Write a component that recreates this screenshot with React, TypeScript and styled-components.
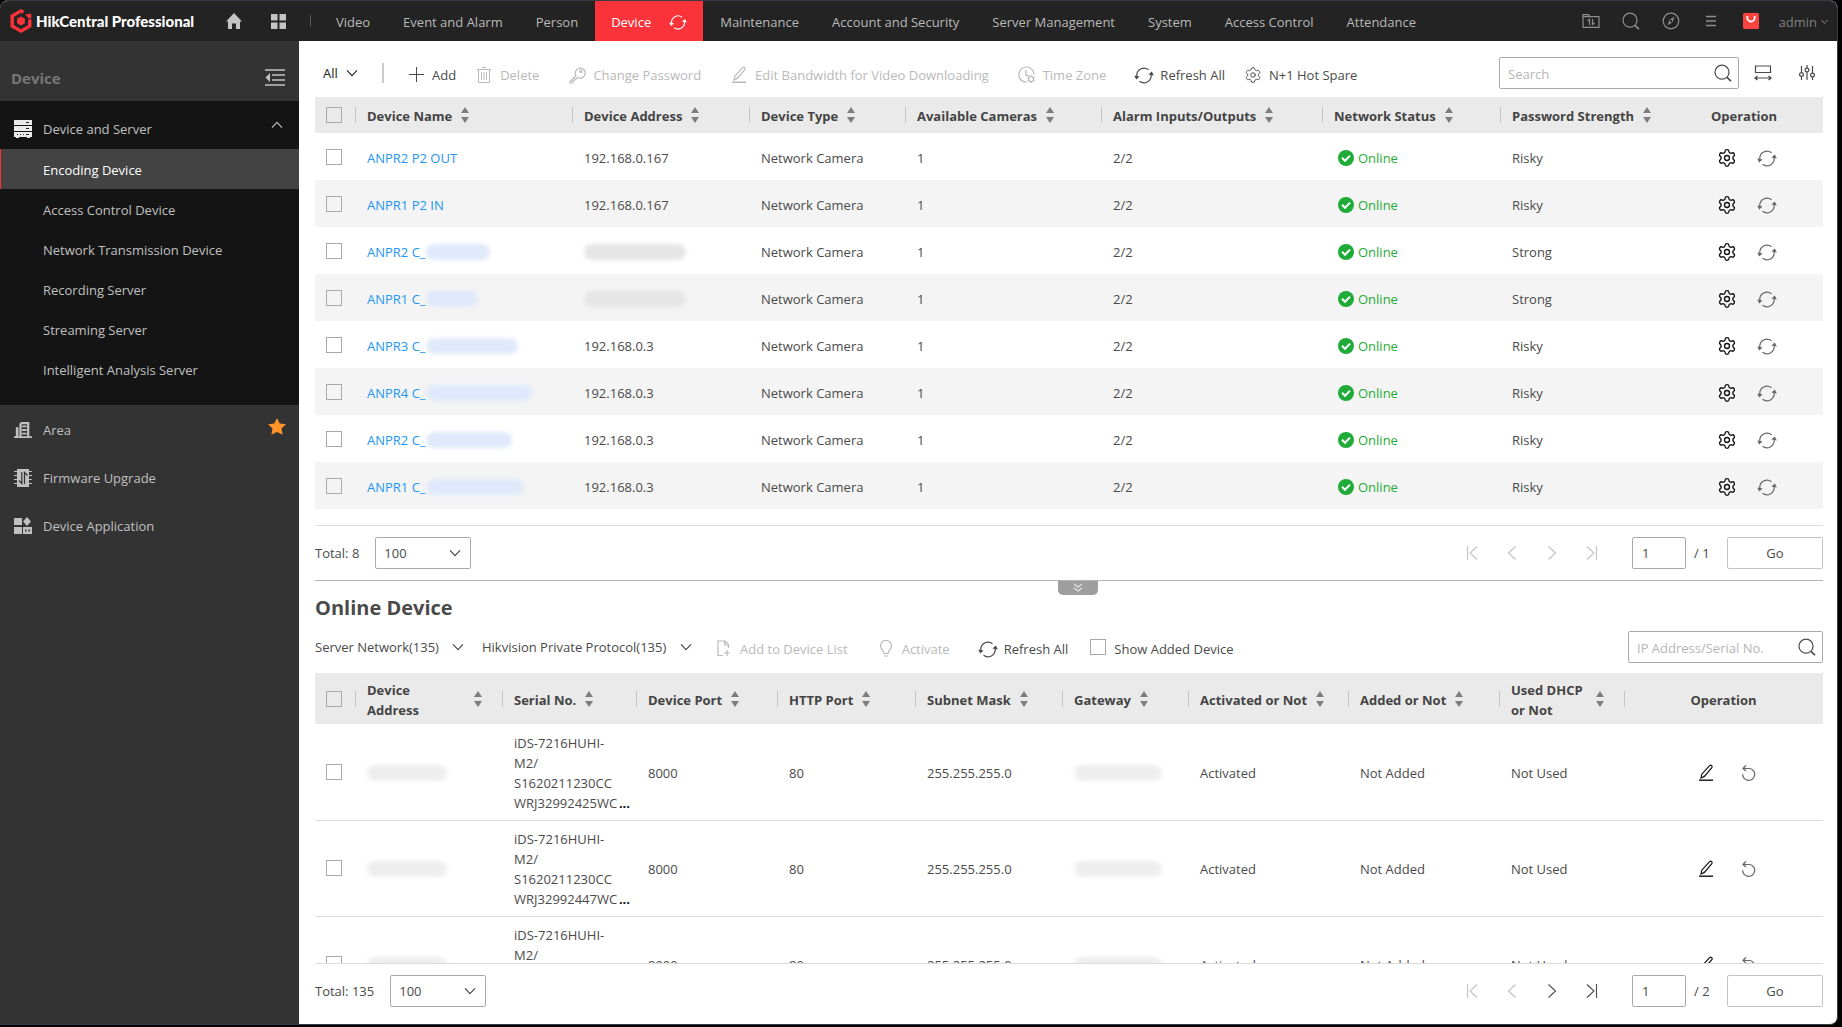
import React from 'react';
import styled, { createGlobalStyle } from 'styled-components';
import { Settings } from 'lucide-react';

interface Device {
    name: string;
    hidden?: number;
    address?: string;
    strength: string;
}

interface Column {
    label: string;
    width: number;
    sortable?: boolean;
}

const navBefore = ['Video', 'Event and Alarm', 'Person'];
const navAfter = ['Maintenance', 'Account and Security', 'Server Management', 'System', 'Access Control', 'Attendance'];

const serverMenu = [
    'Encoding Device',
    'Access Control Device',
    'Network Transmission Device',
    'Recording Server',
    'Streaming Server',
    'Intelligent Analysis Server',
];

const deviceColumns: Column[] = [
    { label: 'Device Name', width: 217, sortable: true },
    { label: 'Device Address', width: 177, sortable: true },
    { label: 'Device Type', width: 156, sortable: true },
    { label: 'Available Cameras', width: 196, sortable: true },
    { label: 'Alarm Inputs/Outputs', width: 221, sortable: true },
    { label: 'Network Status', width: 178, sortable: true },
    { label: 'Password Strength', width: 165, sortable: true },
    { label: 'Operation', width: 158 },
];

const devices: Device[] = [
    { name: 'ANPR2 P2 OUT', address: '192.168.0.167', strength: 'Risky' },
    { name: 'ANPR1 P2 IN', address: '192.168.0.167', strength: 'Risky' },
    { name: 'ANPR2 C_', hidden: 64, strength: 'Strong' },
    { name: 'ANPR1 C_', hidden: 52, strength: 'Strong' },
    { name: 'ANPR3 C_', hidden: 92, address: '192.168.0.3', strength: 'Risky' },
    { name: 'ANPR4 C_', hidden: 106, address: '192.168.0.3', strength: 'Risky' },
    { name: 'ANPR2 C_', hidden: 86, address: '192.168.0.3', strength: 'Risky' },
    { name: 'ANPR1 C_', hidden: 98, address: '192.168.0.3', strength: 'Risky' },
];

const onlineColumns: Column[] = [
    { label: 'Device Address', width: 147, sortable: true },
    { label: 'Serial No.', width: 134, sortable: true },
    { label: 'Device Port', width: 141, sortable: true },
    { label: 'HTTP Port', width: 138, sortable: true },
    { label: 'Subnet Mask', width: 147, sortable: true },
    { label: 'Gateway', width: 126, sortable: true },
    { label: 'Activated or Not', width: 160, sortable: true },
    { label: 'Added or Not', width: 151, sortable: true },
    { label: 'Used DHCP or Not', width: 125, sortable: true },
    { label: 'Operation', width: 199 },
];

const serials = ['WRJ32992425WC', 'WRJ32992447WC', 'WRJ32992451WC'];

const RefreshIcon = ({ size = 20 }: { size?: number }) => (
    <svg width={size} height={size} viewBox="0 0 20 20" fill="none" stroke="currentColor" strokeWidth="1.2">
        <path d="M14.5 4.7A7.3 7.3 0 0 0 2.8 11M5.5 16.300A7.3 7.3 0 0 0 17.2 10" />
        <path d="M0.2 10.400l5.400 1-3.400 3zM19.800 10.600l-5.400-1 3.400-3z" fill="currentColor" stroke="none" />
    </svg>
);

const SearchIcon = ({ size = 18 }: { size?: number }) => (
    <svg width={size} height={size} viewBox="0 0 18 18" fill="none" stroke="currentColor" strokeWidth="1.2">
        <circle cx="8" cy="8.2" r="7" />
        <path d="M13 13.4l4 3.8" strokeWidth="1.6" />
    </svg>
);

const PencilIcon = () => (
    <svg width="20" height="20" viewBox="0 0 20 20" fill="none" stroke="currentColor" strokeWidth="1.2">
        <path d="M5 15l.8-3.8L13.6 2.6q1-.9 2 0t.2 2L8.4 13.4z" />
        <path d="M3 17.2h14" strokeWidth="1.4" />
    </svg>
);

const Chevron = ({ up = false }: { up?: boolean }) => (
    <svg width="12" height="8" viewBox="0 0 12 8" fill="none" stroke="currentColor" strokeWidth="1.2">
        <path d={up ? 'M1 6.6L6 1.4l5 5.2' : 'M1 1.4l5 5.2 5-5.2'} />
    </svg>
);

const SortIcon = () => (
    <svg width="8" height="16" viewBox="0 0 8 16" fill="#7d7d7d">
        <path d="M4 0l4 6H0zM4 16l4-6H0z" />
    </svg>
);

const CheckBadge = () => (
    <svg width="16" height="16" viewBox="0 0 16 16">
        <circle cx="8" cy="8" r="8" fill="#1fab38" />
        <path d="M4 7.8l3 3 5-5.2" fill="none" stroke="#fff" strokeWidth="2" />
    </svg>
);

const PageIcon = ({ kind }: { kind: string }) => {
    const paths: Record<string, string> = {
        first: 'M1.500 0v14M11 .5L4 7l7 6.500',
        prev: 'M9.500 .5L2.500 7l7 6.500',
        next: 'M2.500 .5l7 6.500-7 6.500',
        last: 'M10.500 0v14M1 .5l7 6.500-7 6.500',
    };
    return (
        <svg width="12" height="14" viewBox="0 0 12 14" fill="none" stroke="currentColor" strokeWidth="1.1">
            <path d={paths[kind]} />
        </svg>
    );
};

const TableHead = ({ columns, id }: { columns: Column[]; id: string }) => (
    <>
        <colgroup>
            <Col $width={40} />
            {columns.map((c) => <Col key={c.label} $width={c.width} />)}
        </colgroup>
        <thead>
            <tr>
                <HeadCell>
                    <Checkbox id={id} aria-label="Select all" />
                </HeadCell>
                {columns.map((c) => (
                    <HeadCell key={c.label} $center={!c.sortable} $divider={id === 'online' || !!c.sortable}>
                        <HeadLabel $center={!c.sortable}>
                            <span>{c.label}</span>
                            {c.sortable && <SortIcon />}
                        </HeadLabel>
                    </HeadCell>
                ))}
            </tr>
        </thead>
    </>
);

const Pager = ({ total, pages, name }: { total: number; pages: number; name: string }) => (
    <PagerBar>
        <label htmlFor={`${name}-size`}>Total: {total}</label>
        <PageSize>
            <select id={`${name}-size`} defaultValue="100">
                <option>100</option>
            </select>
            <Chevron />
        </PageSize>
        <PageButtons>
            <PageButton disabled aria-label="First page"><PageIcon kind="first" /></PageButton>
            <PageButton disabled aria-label="Previous page"><PageIcon kind="prev" /></PageButton>
            <PageButton disabled={pages < 2} aria-label="Next page"><PageIcon kind="next" /></PageButton>
            <PageButton disabled={pages < 2} aria-label="Last page"><PageIcon kind="last" /></PageButton>
        </PageButtons>
        <PageInput defaultValue="1" aria-label="Page" />
        <PageCount>/ {pages}</PageCount>
        <GoButton>Go</GoButton>
    </PagerBar>
);

const TopBar = () => (
    <Header>
        <Brand>
            <svg width="22" height="24" viewBox="0 0 22 24" fill="none">
                <path d="M13.500 3.300L11 1.900 2.200 7v10L11 22.100 19.800 17v-6.500" stroke="#fa3239" strokeWidth="3.400" />
                <path d="M11 7.600l3.900 2.200v4.500L11 16.500l-3.900-2.200V9.800z" fill="#fa3239" />
                <path d="M15.300 5.200l5.900-.4v4.700l-2.900-.2z" fill="#fa3239" />
            </svg>
            <BrandName>HikCentral Professional</BrandName>
        </Brand>
        <HomeLink href="#home" aria-label="Home">
            <svg width="16" height="16" viewBox="0 0 16 16" fill="currentColor">
                <path d="M8 0l8 8.500h-2V16h-4v-5.500H6V16H2V8.500H0z" />
            </svg>
        </HomeLink>
        <HomeLink href="#apps" aria-label="Applications">
            <svg width="15" height="15" viewBox="0 0 15 15" fill="currentColor">
                <path d="M0 0h6.500v6.500H0zM8.500 0H15v6.500H8.500zM0 8.500h6.500V15H0zM8.500 8.500H15V15H8.500z" />
            </svg>
        </HomeLink>
        <BarDivider />
        <Nav>
            {navBefore.map((n) => <NavLink key={n} href="#">{n}</NavLink>)}
            <NavLink href="#" $active>
                Device
                <RefreshIcon size={18} />
            </NavLink>
            {navAfter.map((n) => <NavLink key={n} href="#">{n}</NavLink>)}
        </Nav>
        <HeaderTools>
            <ToolButton aria-label="Tasks">
                <svg width="18" height="16" viewBox="0 0 18 16" fill="none" stroke="currentColor" strokeWidth="1.2">
                    <path d="M1 14.400V1.600h5.500l1.500 2h9v10.800zM1 3.600h7" />
                    <path d="M7.500 12V6.500L5.500 8M10.500 6v5.500l2-1.800" />
                </svg>
            </ToolButton>
            <ToolButton aria-label="Search"><SearchIcon /></ToolButton>
            <ToolButton aria-label="Wizard">
                <svg width="18" height="18" viewBox="0 0 18 18" fill="none" stroke="currentColor" strokeWidth="1.200">
                    <circle cx="9" cy="9" r="7.800" />
                    <path d="M12.500 4.500L7.600 7.700 5.500 13.500l4.900-3.200z" fill="currentColor" stroke="none" />
                    <circle cx="9" cy="9" r="1.200" fill="#232323" stroke="none" />
                </svg>
            </ToolButton>
            <ToolButton aria-label="Menu">
                <svg width="12" height="12" viewBox="0 0 12 12" stroke="currentColor" strokeWidth="1.600">
                    <path d="M1 1.500h10M1 6h10M1 10.500h10" />
                </svg>
            </ToolButton>
            <ToolButton aria-label="Store">
                <svg width="16" height="16" viewBox="0 0 16 16">
                    <rect width="16" height="16" rx="1.500" fill="#fb4440" />
                    <path d="M4.300 3v1.800a3.700 3.700 0 0 0 7.400 0V3" fill="none" stroke="#fff" strokeWidth="1.800" />
                </svg>
            </ToolButton>
            <UserButton>
                admin
                <svg width="7" height="6" viewBox="0 0 7 6" fill="none" stroke="currentColor">
                    <path d="M.5 1l3 3.500 3-3.500" />
                </svg>
            </UserButton>
        </HeaderTools>
    </Header>
);

const SideBar = () => (
    <Side>
        <SideTitle>
            <span>Device</span>
            <CollapseButton aria-label="Collapse menu">
                <svg width="20" height="17" viewBox="0 0 20 17" stroke="currentColor" strokeWidth="1.500">
                    <path d="M0 1h20M7 6h13M7 11h13M0 16h20" />
                    <path d="M5 4v9L.5 8.500z" fill="currentColor" stroke="none" />
                </svg>
            </CollapseButton>
        </SideTitle>
        <SideGroup>
            <SideItem href="#" $top>
                <svg width="18" height="18" viewBox="0 0 18 18" fill="#eaeaea">
                    <path d="M0 0h18v5H0zM0 6h18v5H0zM0 12h18v5H0zM2 17h3v1H2zM13 17h3v1h-3z" />
                    <path d="M12 2h3v1h-3zM12 8h3v1h-3zM12 14h3v1h-3zM3 14h1v1H3zM6 14h1v1H6zM9 14h1v1H9z" fill="#222" />
                </svg>
                <span>Device and Server</span>
                <Chevron up />
            </SideItem>
            {serverMenu.map((m, i) => <SubItem key={m} href="#" $active={i === 0}>{m}</SubItem>)}
        </SideGroup>
        <SideItem href="#">
            <svg width="20" height="18" viewBox="0 0 20 18" fill="currentColor">
                <path d="M0 16h20v2H0zM2 6h3v10H2zM6 16V2l2-2h9v16h-2.500V2.500h-6V16z" />
                <path d="M9 4h5v2H9zM9 8h5v2H9zM9 12h5v2H9z" />
            </svg>
            <span>Area</span>
            <svg width="18" height="17" viewBox="0 0 18 17" fill="#ff9429">
                <path d="M9 0l2.700 5.500 6.300.8-4.500 4.200 1.100 6.300L9 13.900l-5.600 2.900 1.100-6.300L0 6.300l6.300-.8z" />
            </svg>
        </SideItem>
        <SideItem href="#">
            <svg width="18" height="18" viewBox="0 0 18 18" fill="currentColor">
                <path d="M3 0h12v18H3zM0 2h3v1H0zM0 6h3v1H0zM0 10h3v1H0zM0 14h3v1H0zM15 2h3v1h-3zM15 6h3v1h-3zM15 10h3v1h-3zM15 14h3v1h-3z" />
                <path d="M7.800 3v11.500L5 11.500M10.500 15V3.500l3 3" fill="none" stroke="#333" strokeWidth="1.200" />
            </svg>
            <span>Firmware Upgrade</span>
        </SideItem>
        <SideItem href="#">
            <svg width="18" height="18" viewBox="0 0 18 18" fill="currentColor">
                <path d="M0 1h8v7H0zM0 10h8v7H0zM13 0l4 4.500L13 9 9 4.500zM9 10h9v7H9z" />
                <path d="M11 12.500h1.500v2H11zM14.500 12.500H16v2h-1.500z" fill="#333" />
            </svg>
            <span>Device Application</span>
        </SideItem>
    </Side>
);

const DeviceList = () => (
    <section>
        <Toolbar>
            <Dropdown $dark>
                <select aria-label="Device filter"><option>All</option></select>
                <Chevron />
            </Dropdown>
            <ToolDivider />
            <Action>
                <IconSlot>
                    <svg width="15" height="15" viewBox="0 0 15 15" stroke="currentColor"><path d="M7.500 0v15M0 7.500h15" /></svg>
                </IconSlot>
                Add
            </Action>
            <Action disabled>
                <IconSlot>
                    <svg width="14" height="16" viewBox="0 0 14 16" fill="none" stroke="currentColor">
                        <path d="M0 2.500h14M5 .5h4M1.500 2.500v13h11v-13M4.500 5v8M7 5v8M9.500 5v8" />
                    </svg>
                </IconSlot>
                Delete
            </Action>
            <Action disabled>
                <IconSlot>
                    <svg width="18" height="18" viewBox="0 0 18 18" fill="none" stroke="currentColor" strokeWidth="1.200">
                        <path d="M8 9.800L2 15.500v1.500h2.500v-2h2v-2H8.500l1.300-1.500A5 5 0 1 0 8 9.800z" />
                        <circle cx="12.800" cy="5.200" r="1.200" />
                    </svg>
                </IconSlot>
                Change Password
            </Action>
            <Action disabled>
                <IconSlot><PencilIcon /></IconSlot>
                Edit Bandwidth for Video Downloading
            </Action>
            <Action disabled>
                <IconSlot>
                    <svg width="18" height="18" viewBox="0 0 18 18" fill="none" stroke="currentColor" strokeWidth="1.200">
                        <path d="M8.500 16.200A7.600 7.600 0 1 1 16 8.500M8 4v5.500h3" />
                        <circle cx="13" cy="13" r="2.500" />
                        <path d="M13 9v1.500M13 15.500V17M9.500 11l1.300.8M15.200 14.200l1.300.8M9.500 15l1.300-.8M15.200 11.800l1.300-.8" />
                    </svg>
                </IconSlot>
                Time Zone
            </Action>
            <Action>
                <IconSlot><RefreshIcon /></IconSlot>
                Refresh All
            </Action>
            <Action>
                <IconSlot><Settings size={18} strokeWidth={1.3} /></IconSlot>
                N+1 Hot Spare
            </Action>
            <SearchBox $width={240}>
                <input aria-label="Search" placeholder="Search" />
                <SearchIcon />
            </SearchBox>
            <ViewButton aria-label="Column width">
                <svg width="18" height="16" viewBox="0 0 18 16" fill="none" stroke="currentColor" strokeWidth="1.200">
                    <path d="M1.500 1h15v6.500h-15zM1 13h16M3.500 11L1 13l2.500 2M14.500 11l2.500 2-2.500 2" />
                </svg>
            </ViewButton>
            <ViewButton aria-label="Custom columns">
                <svg width="16" height="16" viewBox="0 0 16 16" fill="none" stroke="currentColor" strokeWidth="1.200">
                    <path d="M2.500 1v6.500M2.500 11.500V15M8 0v3M8 7v8M13.500 1v7M13.500 12v3" />
                    <circle cx="2.500" cy="9.500" r="1.900" />
                    <circle cx="8" cy="5" r="1.900" />
                    <circle cx="13.500" cy="10" r="1.900" />
                </svg>
            </ViewButton>
        </Toolbar>
        <DeviceTable>
            <TableHead columns={deviceColumns} id="devices" />
            <tbody>
                {devices.map((d, i) => (
                    <tr key={i}>
                        <td><Checkbox aria-label={`Select ${d.name}`} /></td>
                        <td>
                            <DeviceLink href="#">
                                {d.name}
                                {d.hidden && <Redacted $width={d.hidden} $tint="#dfe9fb" />}
                            </DeviceLink>
                        </td>
                        <td>{d.address || <Redacted $width={102} $tint="#e5e5e5" />}</td>
                        <td>Network Camera</td>
                        <td>1</td>
                        <td>2/2</td>
                        <td><Status><CheckBadge />Online</Status></td>
                        <td>{d.strength}</td>
                        <td>
                            <Operations>
                                <RowButton $dark aria-label="Configure"><Settings size={20} strokeWidth={1.6} /></RowButton>
                                <RowButton aria-label="Refresh"><RefreshIcon /></RowButton>
                            </Operations>
                        </td>
                    </tr>
                ))}
            </tbody>
        </DeviceTable>
        <Pager total={8} pages={1} name="devices" />
    </section>
);

const OnlineDevices = () => (
    <OnlineSection>
        <Handle aria-label="Collapse online devices">
            <svg width="10" height="10" viewBox="0 0 10 10" fill="none" stroke="#e4e4e4" strokeWidth="1.200">
                <path d="M1 1l4 3 4-3M1 5l4 3 4-3" />
            </svg>
        </Handle>
        <OnlineTitle>Online Device</OnlineTitle>
        <OnlineToolbar>
            <Dropdown>
                <select aria-label="Network"><option>Server Network(135)</option></select>
                <Chevron />
            </Dropdown>
            <Dropdown>
                <select aria-label="Protocol"><option>Hikvision Private Protocol(135)</option></select>
                <Chevron />
            </Dropdown>
            <Action disabled>
                <IconSlot>
                    <svg width="14" height="17" viewBox="0 0 14 17" fill="none" stroke="currentColor" strokeWidth="1.200">
                        <path d="M6 15.500H1V1h7l3.500 3.500V8M7.500 1v4h4M10 10v6M7 13h6" />
                    </svg>
                </IconSlot>
                Add to Device List
            </Action>
            <Action disabled>
                <IconSlot>
                    <svg width="14" height="18" viewBox="0 0 14 18" fill="none" stroke="currentColor" strokeWidth="1.200">
                        <path d="M5 13.500C5 11 1.500 9.500 1.500 6a5.500 5.500 0 0 1 11 0c0 3.500-3.500 5-3.500 7.500zM5 16h4" />
                    </svg>
                </IconSlot>
                Activate
            </Action>
            <Action>
                <IconSlot><RefreshIcon /></IconSlot>
                Refresh All
            </Action>
            <ShowAdded>
                <Checkbox />
                <span>Show Added Device</span>
            </ShowAdded>
            <SearchBox $width={195}>
                <input aria-label="IP Address/Serial No." placeholder="IP Address/Serial No." />
                <SearchIcon />
            </SearchBox>
        </OnlineToolbar>
        <TableClip>
            <OnlineTable>
                <TableHead columns={onlineColumns} id="online" />
                <tbody>
                    {serials.map((s) => (
                        <tr key={s}>
                            <td><Checkbox aria-label={`Select ${s}`} /></td>
                            <td><Redacted $width={80} $tint="#eee" /></td>
                            <td>
                                <Serial>
                                    iDS-7216HUHI-<br />M2/<br />S1620211230CC<br />{s}
                                    <b>...</b>
                                </Serial>
                            </td>
                            <td>8000</td>
                            <td>80</td>
                            <td>255.255.255.0</td>
                            <td><Redacted $width={88} $tint="#eee" /></td>
                            <td>Activated</td>
                            <td>Not Added</td>
                            <td>Not Used</td>
                            <td>
                                <Operations $wide>
                                    <RowButton $dark aria-label="Edit"><PencilIcon /></RowButton>
                                    <RowButton aria-label="Reset">
                                        <svg width="16" height="18" viewBox="0 0 16 18" fill="none" stroke="currentColor" strokeWidth="1.200">
                                            <path d="M2 4.500h7a6 6 0 1 1-7.300 5.800M5 1.500L2 4.500l3 2.500" />
                                        </svg>
                                    </RowButton>
                                </Operations>
                            </td>
                        </tr>
                    ))}
                </tbody>
            </OnlineTable>
        </TableClip>
        <Pager total={135} pages={2} name="online" />
    </OnlineSection>
);

const App: React.FC = () => (
    <>
        <GlobalStyle />
        <Window>
            <TopBar />
            <Body>
                <SideBar />
                <Main>
                    <DeviceList />
                    <OnlineDevices />
                </Main>
            </Body>
        </Window>
    </>
);

export default App;

const GlobalStyle = createGlobalStyle`
    * {
        box-sizing: border-box;
    }

    body {
        margin: 0;
        background: #000;
        color: #4a4a4a;
        font-family: "Open Sans", "Noto Sans", sans-serif;
        font-size: 13px;
        line-height: 20px;
    }

    button, input, select {
        font: inherit;
        color: inherit;
    }

    button {
        background: none;
        border: none;
        padding: 0;
        cursor: pointer;
    }

    a {
        text-decoration: none;
    }

    svg {
        flex: none;
    }
`;

const Window = styled.div`
    display: flex;
    flex-direction: column;
    height: calc(100vh - 2px);
    margin-right: 4px;
    border: solid #3a3a42;
    border-width: 1px 1px 1px 0;
    border-radius: 8px 8px 8px 0;
    overflow: hidden;
    background: #fff;
`;

const Header = styled.header`
    display: flex;
    align-items: center;
    flex: none;
    height: 40px;
    padding-right: 9px;
    background: #232323;
    color: #b9b9b9;
`;

const Brand = styled.div`
    display: flex;
    align-items: center;
    gap: 4px;
    width: 212px;
    padding-left: 10px;
`;

const BrandName = styled.span`
    color: #fff;
    font-family: Lato, sans-serif;
    font-size: 15px;
    font-weight: 900;
    white-space: nowrap;
`;

const HomeLink = styled.a`
    display: flex;
    justify-content: center;
    width: 44px;
    color: #c4c4c4;
`;

const BarDivider = styled.div`
    width: 1px;
    height: 12px;
    margin: 0 9px 0 10px;
    background: #5a5a5a;
`;

const Nav = styled.nav`
    display: flex;
    flex: 1;
    gap: 1px;
    height: 100%;
`;

const NavLink = styled.a<{ $active?: boolean }>`
    display: flex;
    align-items: center;
    gap: 18px;
    padding: 2px 16px 0;
    white-space: nowrap;
    color: ${props => props.$active ? "#fff" : "#b9b9b9"};
    background: ${props => props.$active ? "#fa3239" : "none"};
`;

const HeaderTools = styled.div`
    display: flex;
    align-items: center;
    color: #8e8e8e;
`;

const ToolButton = styled.button`
    display: flex;
    justify-content: center;
    width: 40px;
`;

const UserButton = styled.button`
    display: flex;
    align-items: center;
    gap: 4px;
    padding: 2px 0 0 8px;
    color: #808080;
`;

const Body = styled.div`
    display: flex;
    flex: 1;
    min-height: 0;
`;

const Side = styled.aside`
    flex: none;
    width: 299px;
    background: #333;
    color: #c4c4c4;
`;

const SideTitle = styled.div`
    display: flex;
    align-items: center;
    justify-content: space-between;
    height: 60px;
    padding: 12px 14px 0 11px;
    color: #777;
    font-size: 15px;
    font-weight: 700;

    span {
        padding-top: 2px;
    }
`;

const CollapseButton = styled.button`
    display: flex;
    color: #c4c4c4;
`;

const SideGroup = styled.div`
    padding-bottom: 16px;
    background: #141414;
`;

const SideItem = styled.a<{ $top?: boolean }>`
    display: flex;
    align-items: center;
    height: 48px;
    padding: ${props => props.$top ? "7px 16px 0 14px" : "2px 13px 0 14px"};
    color: #c0c0c0;

    svg:first-child {
        width: 18px;
    }

    span {
        flex: 1;
        padding-left: 11px;
    }

    /* the trailing mark sits a little above the label */
    span + svg {
        margin-bottom: 8px;
    }
`;

const SubItem = styled.a<{ $active?: boolean }>`
    display: flex;
    align-items: center;
    height: 40px;
    padding: 2px 0 0 43px;
    color: ${props => props.$active ? "#fff" : "#c0c0c0"};
    background: ${props => props.$active ? "#434343" : "none"};
    box-shadow: ${props => props.$active ? "inset 1px 0 #fa3239" : "none"};
`;

const Main = styled.main`
    display: flex;
    flex-direction: column;
    flex: 1;
    min-width: 0;
    padding: 0 14px 0 16px;
`;

const Toolbar = styled.div`
    display: flex;
    align-items: center;
    gap: 18px;
    height: 56px;
    padding: 8px 3px 0 8px;
`;

const Dropdown = styled.div<{ $dark?: boolean }>`
    display: flex;
    align-items: center;
    position: relative;
    color: ${props => props.$dark ? "#222" : "#4a4a4a"};

    select {
        appearance: none;
        border: none;
        background: none;
        padding: 0 ${props => props.$dark ? 20 : 25}px 0 0;
        cursor: pointer;
    }

    svg {
        position: absolute;
        right: 0;
        pointer-events: none;
    }
`;

const ToolDivider = styled.div`
    width: 2px;
    height: 20px;
    margin: 0 4px 0 6px;
    background: #ccc;
`;

const Action = styled.button`
    display: flex;
    align-items: center;
    gap: 6px;
    padding-top: 3px;
    white-space: nowrap;

    &:disabled {
        padding-right: 10px;
        color: #b9b9b9;
        cursor: default;
    }

    ${Dropdown} + & {
        margin-left: 4px;
    }
`;

const IconSlot = styled.span`
    display: flex;
    align-items: center;
    justify-content: center;
    width: 20px;
`;

const SearchBox = styled.div<{ $width: number }>`
    display: flex;
    align-items: center;
    flex: none;
    width: ${props => props.$width}px;
    height: 32px;
    margin-left: auto;
    padding: 0 6px 0 8px;
    border: 1px solid #aaa;
    border-radius: 2px;

    input {
        flex: 1;
        min-width: 0;
        padding: 1px 0 0;
        border: none;
        outline: none;
        background: none;
    }

    input::placeholder {
        color: #b5b5b5;
    }
`;

const ViewButton = styled.button`
    display: flex;
    justify-content: center;
    width: 26px;
    margin-left: -7px;

    & + & {
        margin-left: 0;
    }
`;

const Table = styled.table`
    width: 100%;
    table-layout: fixed;
    border-collapse: collapse;

    td {
        padding: 2px 0 0 12px;
    }

    td:first-child {
        padding: 0 0 0 11px;
    }
`;

const Col = styled.col<{ $width: number }>`
    width: ${props => props.$width}px;
`;

const HeadCell = styled.th<{ $center?: boolean; $divider?: boolean }>`
    padding: ${props => props.$center ? "0" : "0 20px 0 0"};
    background: ${props => props.$divider
        ? "linear-gradient(#c4c4c4, #c4c4c4) left center / 1px 16px no-repeat #eaeaea"
        : "#eaeaea"};
    color: #444;
    text-align: left;

    &:first-child {
        padding: 0 0 0 11px;
    }
`;

const HeadLabel = styled.div<{ $center?: boolean }>`
    display: flex;
    align-items: center;
    justify-content: ${props => props.$center ? "center" : "flex-start"};
    gap: 9px;
    padding-left: ${props => props.$center ? 0 : 12}px;

    span {
        padding-top: 2px;
    }
`;

const DeviceTable = styled(Table)`
    th {
        height: 36px;
    }

    ${HeadLabel} {
        white-space: nowrap;
    }

    td {
        height: 47px;
    }

    tbody tr:nth-child(even) {
        background: #f4f4f4;
    }
`;

const OnlineTable = styled(Table)`
    th {
        height: 51px;
    }

    td {
        height: 96px;
        border-bottom: 1px solid #dcdcdc;
    }
`;

const Checkbox = styled.input.attrs({ type: 'checkbox' })`
    appearance: none;
    display: block;
    flex: none;
    width: 16px;
    height: 16px;
    margin: 0;
    border: 1px solid #aaa;

    &:checked {
        background: #fa3239;
    }
`;

const DeviceLink = styled.a`
    display: flex;
    align-items: center;
    color: #2196f3;
`;

const Redacted = styled.span<{ $width: number; $tint: string }>`
    display: block;
    width: ${props => props.$width}px;
    height: 16px;
    border-radius: 8px;
    background: ${props => props.$tint};
    filter: blur(2px);
`;

const Status = styled.span`
    display: flex;
    align-items: center;
    gap: 4px;
    padding-left: 4px;
    color: #1fab38;
`;

const Operations = styled.div<{ $wide?: boolean }>`
    display: flex;
    align-items: center;
    gap: ${props => props.$wide ? 25 : 20}px;
    padding-left: ${props => props.$wide ? 60 : 40}px;
`;

const RowButton = styled.button<{ $dark?: boolean }>`
    display: flex;
    color: ${props => props.$dark ? "#111" : "#666"};
`;

const PagerBar = styled.div`
    display: flex;
    align-items: center;
    padding: 11px 0;

    section > & {
        border-top: 1px solid #dcdcdc;
    }

    table + & {
        margin-top: 16px;
        border-bottom: 1px solid #b4b4b4;
    }
`;

const PageSize = styled.div`
    display: flex;
    align-items: center;
    position: relative;
    margin-left: 16px;

    select {
        appearance: none;
        width: 96px;
        height: 32px;
        padding: 0 8px;
        border: 1px solid #aaa;
        border-radius: 2px;
        background: #fff;
    }

    svg {
        position: absolute;
        right: 10px;
        pointer-events: none;
    }
`;

const PageButtons = styled.div`
    display: flex;
    gap: 28px;
    margin: 0 34px 0 auto;
`;

const PageButton = styled.button`
    display: flex;

    &:disabled {
        color: #c0c0c0;
        cursor: default;
    }
`;

const PageInput = styled.input`
    width: 54px;
    height: 32px;
    padding: 0 9px;
    border: 1px solid #aaa;
    border-radius: 2px;
`;

const PageCount = styled.span`
    width: 41px;
    padding-left: 8px;
`;

const GoButton = styled.button`
    width: 96px;
    height: 32px;
    border: 1px solid #c4c4c4;
    border-radius: 2px;
`;

const OnlineSection = styled.section`
    display: flex;
    flex-direction: column;
    flex: 1;
    min-height: 0;
    position: relative;
    padding-bottom: 6px;
`;

const Handle = styled.button`
    display: flex;
    align-items: center;
    justify-content: center;
    position: absolute;
    top: 0;
    left: calc(50% - 11px);
    width: 40px;
    height: 14px;
    border-radius: 0 0 5px 5px;
    background: #9e9e9e;
`;

const OnlineTitle = styled.h2`
    margin: 12px 0 8px;
    font-size: 20px;
    line-height: 30px;
`;

const OnlineToolbar = styled.div`
    display: flex;
    align-items: center;
    gap: 18px;
    margin-bottom: 10px;
`;

const ShowAdded = styled.label`
    display: flex;
    align-items: center;
    gap: 8px;
    margin-left: 4px;
    white-space: nowrap;

    span {
        padding-top: 4px;
    }
`;

const TableClip = styled.div`
    flex: 1;
    min-height: 0;
    overflow: hidden;
`;

const Serial = styled.div`
    position: relative;
    width: 116px;

    b {
        position: absolute;
        right: 0;
        bottom: 0;
        color: #111;
    }
`;
